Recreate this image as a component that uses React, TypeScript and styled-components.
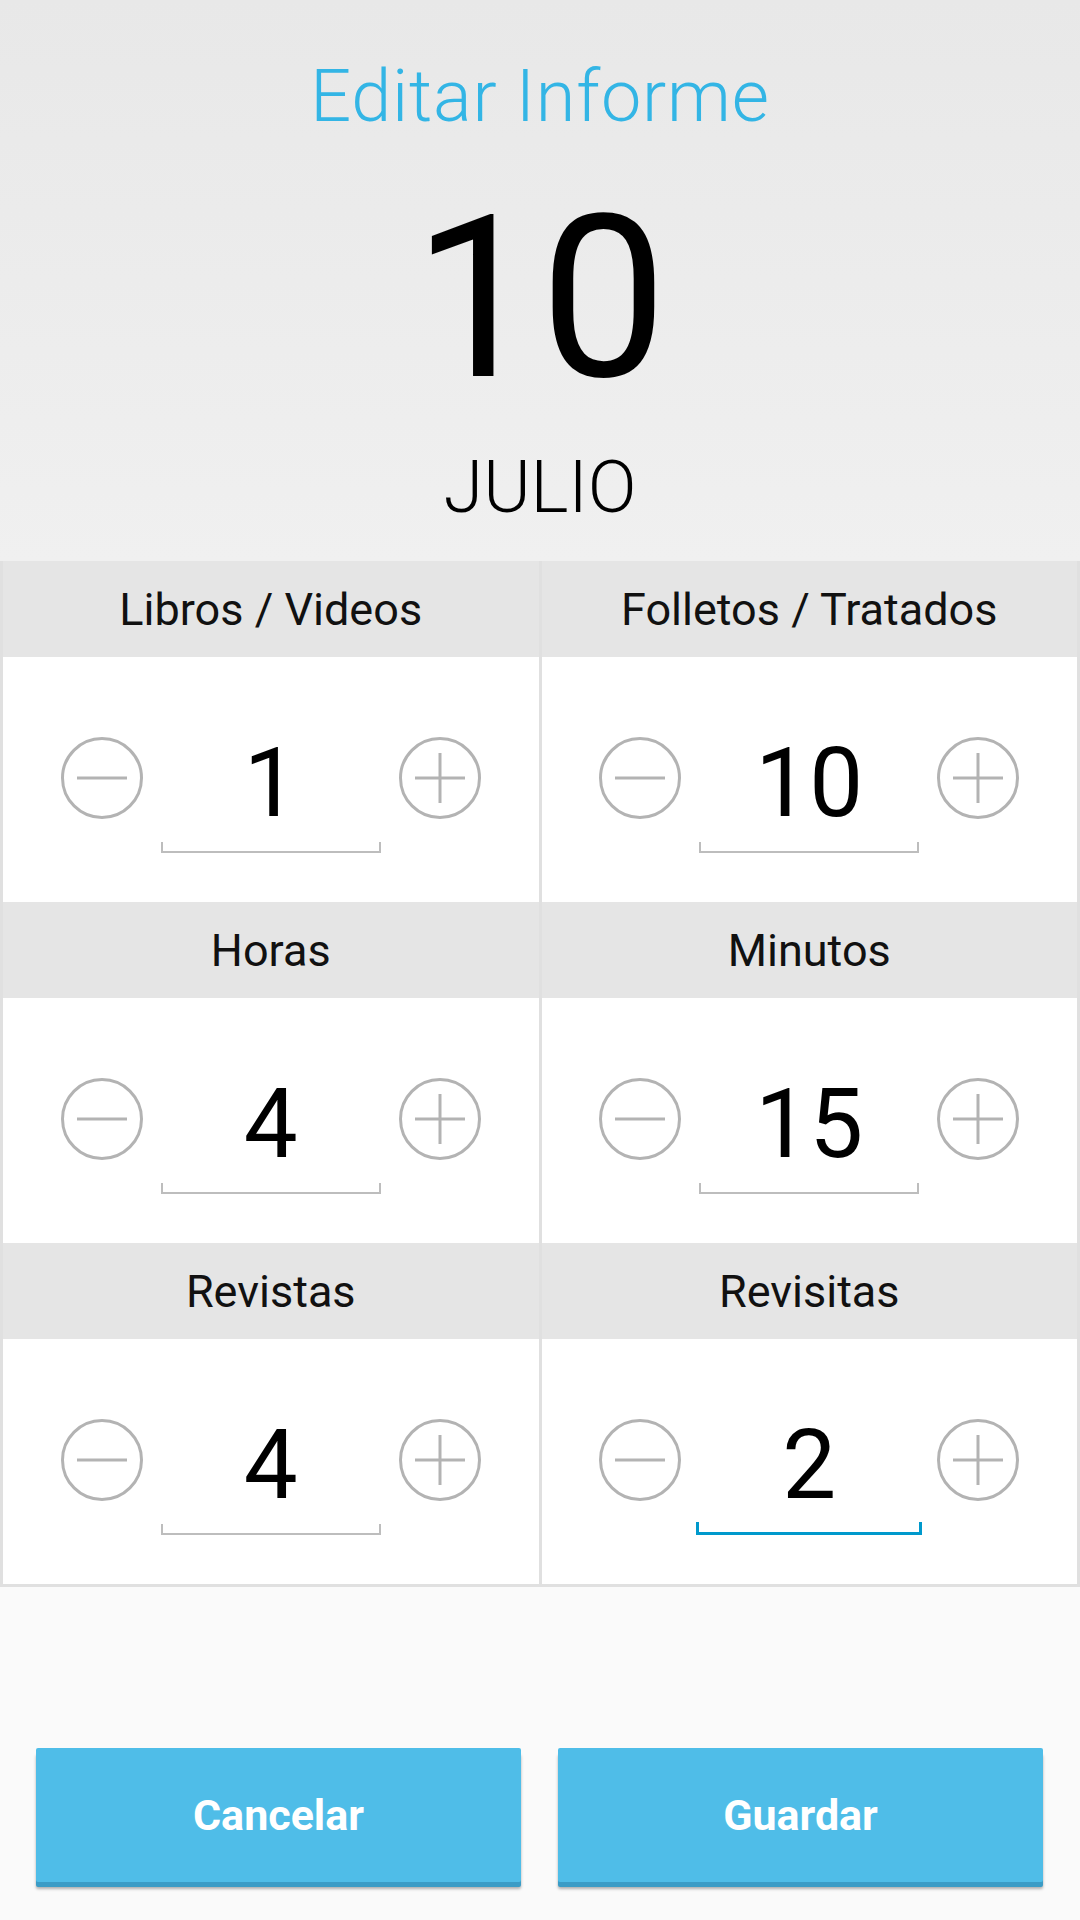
import React from 'react'
import styled, { createGlobalStyle } from 'styled-components'

const GlobalStyle = createGlobalStyle`
  html, body {
    margin: 0;
    padding: 0;
    background: #fafafa;
  }
  body {
    font-family: Roboto, 'Liberation Sans', sans-serif;
  }
`

const Screen = styled.div`
  width: 1080px;
  height: 1920px;
  display: flex;
  flex-direction: column;
  background: #fafafa;
  overflow: hidden;
`

const Header = styled.header`
  height: 561px;
  flex: none;
  display: flex;
  flex-direction: column;
  align-items: center;
  padding-top: 61px;
  box-sizing: border-box;
  background: linear-gradient(to bottom, #e8e8e8, #f0f0f0);
`

const Title = styled.h1`
  margin: 0;
  font-size: 72px;
  line-height: 72px;
  font-weight: 300;
  letter-spacing: 0.8px;
  color: #33b5e5;
`

const Day = styled.div`
  margin-top: 53px;
  font-size: 226px;
  line-height: 226px;
  font-weight: 400;
  color: #000;
`

const Month = styled.div`
  margin-top: 40px;
  font-size: 72px;
  line-height: 72px;
  font-weight: 300;
  color: #000;
`

const Grid = styled.section`
  flex: none;
  display: grid;
  grid-template-columns: 1fr 1fr;
  column-gap: 3px;
  padding: 0 3px 3px 3px;
  background: #e0e0e0;
`

const Cell = styled.div`
  display: flex;
  flex-direction: column;
`

const CellHeader = styled.div`
  height: 96px;
  display: flex;
  align-items: center;
  justify-content: center;
  background: #e5e5e5;
  font-size: 45px;
  color: #111;
`

const CellBody = styled.div`
  height: 245px;
  display: flex;
  align-items: center;
  justify-content: center;
  gap: 18px;
  padding-bottom: 3px;
  box-sizing: border-box;
  background: #fff;
`

const RoundButton = styled.button`
  width: 82px;
  height: 82px;
  padding: 0;
  border: none;
  background: none;
  display: flex;
  cursor: pointer;
`

const Field = styled.div`
  width: 220px;
  padding-top: 32px;
  display: flex;
  flex-direction: column;
  align-items: stretch;
`

const Value = styled.div`
  font-size: 96px;
  line-height: 96px;
  text-align: center;
  color: #000;
`

const Underline = styled.div<{ $focused?: boolean }>`
  margin-top: ${({ $focused }) => ($focused ? '9px' : '11px')};
  height: ${({ $focused }) => ($focused ? '13px' : '11px')};
  box-sizing: border-box;
  border: ${({ $focused }) => ($focused ? '3px solid #0099cc' : '2px solid #bdbdbd')};
  border-top: none;
  ${({ $focused }) => ($focused ? 'margin-left: -3px; margin-right: -3px;' : '')}
`

const Footer = styled.footer`
  flex: 1;
  display: flex;
  align-items: flex-end;
  gap: 37px;
  padding: 0 37px 38px 36px;
`

const ActionButton = styled.button`
  flex: 1;
  height: 134px;
  border: none;
  border-radius: 2px;
  background: #4fbde8;
  color: #fff;
  font-family: Roboto, 'Liberation Sans', sans-serif;
  font-size: 43px;
  font-weight: 700;
  box-shadow: 0 5px 0 #3b9cc6, 0 7px 3px rgba(0, 0, 0, 0.3);
  cursor: pointer;
`

const CircleIcon: React.FC<{ plus?: boolean }> = ({ plus }) => (
  <svg width="82" height="82" viewBox="0 0 82 82">
    <circle cx="41" cy="41" r="39.5" fill="none" stroke="#b3b3b3" strokeWidth="3" />
    <line x1="16" y1="41" x2="66" y2="41" stroke="#b3b3b3" strokeWidth="3" />
    {plus && <line x1="41" y1="16" x2="41" y2="66" stroke="#b3b3b3" strokeWidth="3" />}
  </svg>
)

type Counter = { label: string; value: number; focused?: boolean }

const counters: Counter[] = [
  { label: 'Libros / Videos', value: 1 },
  { label: 'Folletos / Tratados', value: 10 },
  { label: 'Horas', value: 4 },
  { label: 'Minutos', value: 15 },
  { label: 'Revistas', value: 4 },
  { label: 'Revisitas', value: 2, focused: true },
]

const Stepper: React.FC<Counter> = ({ label, value, focused }) => (
  <Cell>
    <CellHeader>{label}</CellHeader>
    <CellBody>
      <RoundButton aria-label="menos">
        <CircleIcon />
      </RoundButton>
      <Field>
        <Value>{value}</Value>
        <Underline $focused={focused} />
      </Field>
      <RoundButton aria-label="más">
        <CircleIcon plus />
      </RoundButton>
    </CellBody>
  </Cell>
)

const App: React.FC = () => (
  <Screen>
    <GlobalStyle />
    <Header>
      <Title>Editar Informe</Title>
      <Day>10</Day>
      <Month>JULIO</Month>
    </Header>
    <Grid>
      {counters.map((c) => (
        <Stepper key={c.label} {...c} />
      ))}
    </Grid>
    <Footer>
      <ActionButton>Cancelar</ActionButton>
      <ActionButton>Guardar</ActionButton>
    </Footer>
  </Screen>
)

export default App
